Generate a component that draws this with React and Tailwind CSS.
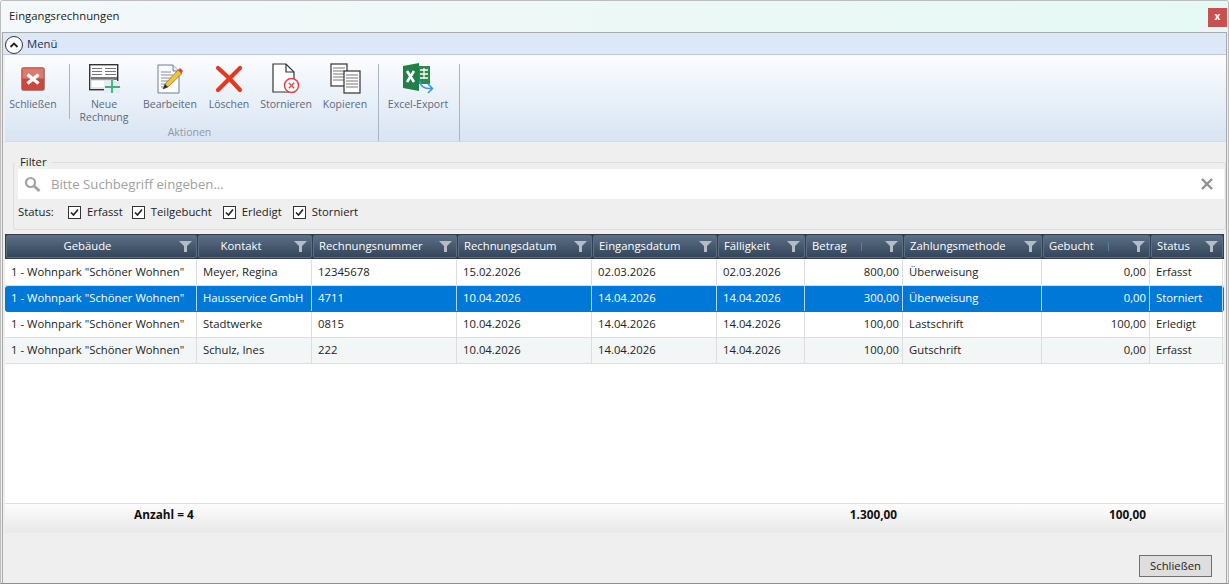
import React from "react";

const font = "[font-family:'Open_Sans','Noto_Sans',sans-serif]";
const cols = "grid grid-cols-[192px_115px_145px_135px_125px_88px_98px_139px_108px_73px]";

const columns = [
  { title: "Gebäude", center: true },
  { title: "Kontakt", center: true },
  { title: "Rechnungsnummer" },
  { title: "Rechnungsdatum" },
  { title: "Eingangsdatum" },
  { title: "Fälligkeit" },
  { title: "Betrag", sort: true },
  { title: "Zahlungsmethode" },
  { title: "Gebucht", sort: true },
  { title: "Status" },
];

const rows = [
  ["1 - Wohnpark \"Schöner Wohnen\"", "Meyer, Regina", "12345678", "15.02.2026", "02.03.2026", "02.03.2026", "800,00", "Überweisung", "0,00", "Erfasst"],
  ["1 - Wohnpark \"Schöner Wohnen\"", "Hausservice GmbH", "4711", "10.04.2026", "14.04.2026", "14.04.2026", "300,00", "Überweisung", "0,00", "Storniert"],
  ["1 - Wohnpark \"Schöner Wohnen\"", "Stadtwerke", "0815", "10.04.2026", "14.04.2026", "14.04.2026", "100,00", "Lastschrift", "100,00", "Erledigt"],
  ["1 - Wohnpark \"Schöner Wohnen\"", "Schulz, Ines", "222", "10.04.2026", "14.04.2026", "14.04.2026", "100,00", "Gutschrift", "0,00", "Erfasst"],
];

function CloseIcon() {
  return (
    <svg width="24" height="24" viewBox="0 0 24 24">
      <rect x="0.500" y="0.500" width="23" height="23" rx="2" fill="#c9483c" stroke="#a8847c" />
      <rect x="1.500" y="1.500" width="21" height="10" fill="#dc7a70" />
      <path d="M6.500 7.500 L17.500 16.500 M17.500 7.500 L6.500 16.500" stroke="#fff" strokeWidth="3.400" />
    </svg>
  );
}

function NewIcon() {
  return (
    <svg width="31" height="29" viewBox="0 0 31 29">
      <rect x="0.700" y="0.700" width="28" height="25" fill="#fff" stroke="#333" strokeWidth="1.400" />
      <path d="M3 4.500h10M16 4.500h11M3 7.500h10M16 7.500h11M3 10.500h10M16 10.500h11" stroke="#777" />
      <rect x="2" y="13" width="26" height="3" fill="#777" />
      <rect x="2" y="16" width="22" height="8" fill="#fff" stroke="#ccc" />
      <rect x="15" y="17" width="16" height="12" fill="#e4edf6" />
      <path d="M23 16v13M16 23h15" stroke="#2eb872" strokeWidth="1.800" />
    </svg>
  );
}

function EditIcon() {
  return (
    <svg width="27" height="30" viewBox="0 0 27 30">
      <path d="M1 1h15l6 6v22H1z" fill="#fbfcfe" stroke="#6f7f92" />
      <path d="M16 1v6h6" fill="#e6ebf1" stroke="#6f7f92" />
      <path d="M4 8h10M4 11h12M4 14h10M4 17h8M4 20h6M4 23h4" stroke="#8a8f96" />
      <path d="M6 25l2-5L21 6l4 3.500L11 23z" fill="#f3c23c" stroke="#8a6a20" strokeWidth="0.700" />
      <path d="M21 6l2-2 3 3-1.500 2.500z" fill="#d4483a" />
      <path d="M6 25l2-5 3 3z" fill="#2c2c2c" />
    </svg>
  );
}

function DeleteIcon() {
  return (
    <svg width="28" height="28" viewBox="0 0 28 28">
      <path d="M3 3 L14 13 L25 25 M25 3 L14 14 L3 25" fill="none" stroke="#e5391f" strokeWidth="4.200" strokeLinecap="round" />
    </svg>
  );
}

function CancelIcon() {
  return (
    <svg width="28" height="31" viewBox="0 0 28 31">
      <path d="M1 1h13l8 8v20H1z" fill="#fff" stroke="#333" strokeWidth="1.200" />
      <path d="M14 1v8h8" fill="none" stroke="#333" strokeWidth="1.200" />
      <circle cx="19.500" cy="22.500" r="7" fill="#fff" stroke="#e8414a" strokeWidth="1.500" />
      <path d="M16.800 19.800l5.400 5.400M22.200 19.800l-5.400 5.400" stroke="#e8414a" strokeWidth="1.300" />
    </svg>
  );
}

function CopyIcon() {
  return (
    <svg width="31" height="31" viewBox="0 0 31 31">
      <rect x="1" y="1" width="16" height="22" fill="#fff" stroke="#333" strokeWidth="1.200" />
      <path d="M3 5h12M3 8h12M3 11h12M3 14h12M3 17h12" stroke="#777" />
      <rect x="14" y="8" width="16" height="22" fill="#fff" stroke="#333" strokeWidth="1.200" />
      <path d="M16 12h12M16 15h12M16 18h12M16 21h12M16 24h12" stroke="#777" />
    </svg>
  );
}

function ExcelIcon() {
  return (
    <svg width="32" height="31" viewBox="0 0 32 31">
      <rect x="16" y="3" width="12" height="18" fill="#2e8b4a" />
      <path d="M18 7h8M18 11h8M18 15h8M22 5v11" stroke="#fff" strokeWidth="1.300" />
      <path d="M1 3l16-3v28l-16-3z" fill="#1f8048" />
      <path d="M5 8l7 11M12 8l-7 11" stroke="#fff" strokeWidth="2.600" />
      <path d="M18 18c0 5 4 8 12 7.500M26 21l4.500 4.500L26 30" fill="none" stroke="#3f96e0" strokeWidth="1.500" />
    </svg>
  );
}

function FunnelIcon() {
  return (
    <svg width="13" height="11" viewBox="0 0 13 11" className="shrink-0">
      <path d="M0 0h13L8 5v6H5V5z" fill="#b4bcc6" />
    </svg>
  );
}

function RibbonButton({ icon, label, width }) {
  return (
    <div className={`flex flex-col items-center text-[#5a6a80] text-[10.500px] leading-[13px] text-center ${width}`}>
      <div className="h-[31px] mt-[-1px] flex items-center justify-center">{icon}</div>
      <div className="mt-[4px] whitespace-nowrap">{label}</div>
    </div>
  );
}

function Check({ label, className = "" }) {
  return (
    <div className={`flex items-center gap-[6px] ${className}`}>
      <div className="w-[13px] h-[13px] border border-[#333] bg-white flex items-center justify-center">
        <svg width="11" height="11" viewBox="0 0 11 11">
          <path d="M2 5.500l2.500 2.500L9 2.500" fill="none" stroke="#222" strokeWidth="1.600" />
        </svg>
      </div>
      <span>{label}</span>
    </div>
  );
}

export default function App() {
  return (
    <div className={`w-[1229px] h-[584px] overflow-hidden bg-[#efefef] border border-[#bdbdbd] border-b-[#8f8f8f] rounded-t-[3px] text-[11.300px] text-[#222] flex flex-col ${font}`}>
      {/* Title bar */}
      <div className="h-[31px] shrink-0 flex items-start justify-between bg-gradient-to-r from-[#f4f8fa] to-[#e5f9f4]">
        <div className="pl-[8px] pt-[7px] leading-[16px]">Eingangsrechnungen</div>
        <div className="w-[19px] h-[19px] mt-[7px] mr-[1px] bg-[#c9504f] text-white text-[10px] font-bold leading-[17px] text-center">x</div>
      </div>

      <div className="mx-[1px] border border-[#a9a9a9] border-b-0 flex-1 flex flex-col min-h-0">
        {/* Menu strip */}
        <div className="h-[22px] shrink-0 flex items-center gap-[4px] pl-[2px] pt-[2px] bg-[#dce8f8] border-b border-[#b6cbe4]">
          <div className="w-[18px] h-[18px] rounded-full border border-[#333] bg-white flex items-center justify-center">
            <svg width="10" height="8" viewBox="0 0 10 8">
              <path d="M1.500 6L5 2.500 8.500 6" fill="none" stroke="#222" strokeWidth="1.800" />
            </svg>
          </div>
          <span className="text-[#1f2f55]">Menü</span>
        </div>

        {/* Ribbon */}
        <div className="h-[87px] shrink-0 flex items-stretch ml-[2px] bg-gradient-to-b from-[#fcfdff] to-[#d8e4f2] border-b border-[#d0dae6] pt-[9px]">
          <div className="flex items-start">
            <RibbonButton icon={<CloseIcon />} label="Schließen" width="w-[56px]" />
          </div>
          <div className="w-px h-[55px] bg-[#a8b5c4] ml-[8px]" />
          <div className="w-[308px] flex flex-col">
            <div className="flex h-[63px] items-start">
              <RibbonButton icon={<NewIcon />} label={<>Neue<br />Rechnung</>} width="w-[68px]" />
              <RibbonButton icon={<EditIcon />} label="Bearbeiten" width="w-[60px] ml-[2px]" />
              <RibbonButton icon={<DeleteIcon />} label="Löschen" width="w-[50px] ml-[4px]" />
              <RibbonButton icon={<CancelIcon />} label="Stornieren" width="w-[60px] ml-[2px]" />
              <RibbonButton icon={<CopyIcon />} label="Kopieren" width="w-[56px] ml-[1px]" />
            </div>
            <div className="text-center text-[10.500px] text-[#8c98a8] pr-[69px]">Aktionen</div>
          </div>
          <div className="w-px h-[77px] bg-[#a8b5c4]" />
          <div className="w-[80px] flex justify-center pr-[2px]">
            <RibbonButton icon={<ExcelIcon />} label="Excel-Export" width="w-[70px]" />
          </div>
          <div className="w-px h-[77px] bg-[#a8b5c4]" />
        </div>

        {/* Filter group */}
        <div className="relative mt-[20px] ml-[10px] h-[68px] border border-[#dcdcdc] rounded-[3px] pl-[4px] pr-[1px] pt-[6px] shrink-0">
          <div className="absolute -top-[8px] left-[1px] bg-[#efefef] px-[5px] leading-[14px]">Filter</div>
          <div className="h-[30px] bg-white flex items-center pl-[6px] pr-[10px] text-[13.200px] text-[#a0a0a0]">
            <svg width="17" height="17" viewBox="0 0 17 17">
              <circle cx="6.500" cy="6.500" r="4.500" fill="none" stroke="#a3a3a3" strokeWidth="2.200" />
              <path d="M10 10l5.500 5" stroke="#a3a3a3" strokeWidth="3" />
            </svg>
            <span className="ml-[10px] mt-[2px] flex-1">Bitte Suchbegriff eingeben...</span>
            <svg width="14" height="14" viewBox="0 0 14 14">
              <path d="M2 2l10 10M12 2L2 12" stroke="#8f8f8f" strokeWidth="2.400" />
            </svg>
          </div>
          <div className="flex items-center mt-[5px] leading-[16px]">
            <span className="w-[50px]">Status:</span>
            <div className="flex gap-[11px]">
              <Check label="Erfasst" className="mr-[-2px]" />
              <Check label="Teilgebucht" />
              <Check label="Erledigt" />
              <Check label="Storniert" />
            </div>
          </div>
        </div>

        {/* Grid */}
        <div className="mt-[4px] ml-[2px] mr-[2px] flex-1 flex flex-col min-h-0">
          <div className={`${cols} h-[25px] shrink-0 bg-[#2f4054] p-px`}>
            {columns.map((c) => (
              <div
                key={c.title}
                className="relative flex items-center pl-[5px] pr-[4px] mr-px border border-[#5d6d80] rounded-[2px] bg-gradient-to-b from-[#5d6f86] via-[#47596f] to-[#34465a] text-white"
              >
                <span className={c.center ? "flex-1 text-center pr-[16px]" : "flex-1 whitespace-nowrap"}>{c.title}</span>
                {c.sort && <span className="absolute right-[40px] top-[6px] w-px h-[9px] bg-[#5b7da0]" />}
                <FunnelIcon />
              </div>
            ))}
          </div>

          <div className="flex-1 bg-white flex flex-col min-h-0 pt-[1px]">
            {rows.map((row, i) => {
              const selected = i === 1;
              const alt = i === 3;
              return (
                <div
                  key={row[1]}
                  className={`${cols} h-[26px] shrink-0 items-stretch border-b ${selected ? "bg-[#0078d7] text-white rounded-[3px] border-[#0078d7]" : alt ? "bg-[#f3f6f7] border-[#dddddd]" : "bg-white border-[#dddddd]"}`}
                >
                  {row.map((cell, j) => {
                    const right = j === 6 || j === 8;
                    return (
                      <div
                        key={j}
                        className={`flex items-center px-[6px] border-r ${selected ? "border-[#b5d5f0]" : "border-[#dddddd]"} ${right ? "justify-end pr-[3px]" : ""} whitespace-nowrap overflow-hidden`}
                      >
                        {cell}
                      </div>
                    );
                  })}
                </div>
              );
            })}
          </div>

          {/* Totals */}
          <div className={`${cols} h-[30px] shrink-0 items-start pt-[2px] text-[11.800px] font-bold border-t border-[#dddddd] bg-gradient-to-b from-[#fdfdfd] to-[#e8e8e8] text-[#111]`}>
            <div className="pl-[129px] col-span-2">Anzahl = 4</div>
            <div className="col-start-7 text-right pr-[6px]">1.300,00</div>
            <div className="col-start-9 text-right pr-[4px]">100,00</div>
          </div>
        </div>

        {/* Footer */}
        <div className="h-[50px] shrink-0 flex items-start justify-end pt-[22px] pr-[14px]">
          <button className="w-[73px] h-[22px] border border-[#707070] bg-[#dedede] leading-[18px] text-[#222]">Schließen</button>
        </div>
      </div>
    </div>
  );
}
